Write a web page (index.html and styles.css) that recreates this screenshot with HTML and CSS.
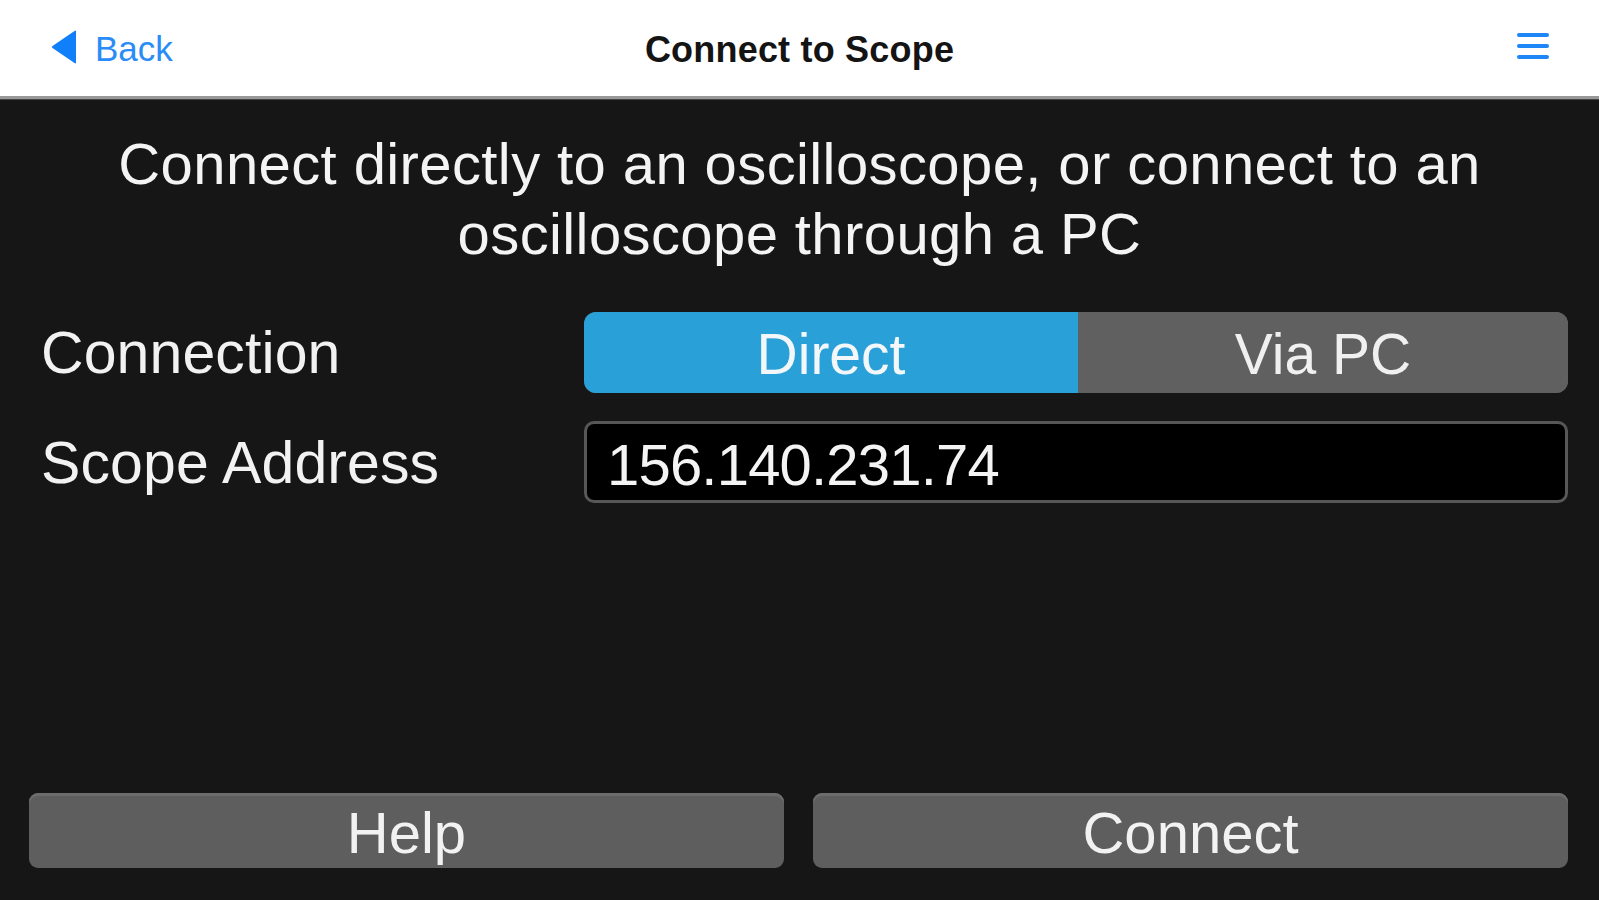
FILE: index.html
```html
<!DOCTYPE html>
<html lang="en">
<head>
<meta charset="utf-8">
<title>Connect to Scope</title>
<link rel="stylesheet" href="styles.css">
</head>
<body>
<div class="screen">
  <header class="navbar">
    <a class="back" href="#">
      <svg class="back-icon" width="26" height="34" viewBox="0 0 26 34" aria-hidden="true">
        <path d="M25 1.5 L25 32.5 Q25 34 23.5 33 L1.5 18 Q0 17 1.5 16 L23.5 1 Q25 0 25 1.5 Z" fill="#0f7ffa"/>
      </svg>
      <span>Back</span>
    </a>
    <h1 class="title">Connect to Scope</h1>
    <button class="menu" aria-label="Menu">
      <svg width="32" height="28" viewBox="0 0 32 28" aria-hidden="true">
        <line x1="2" y1="3" x2="30" y2="3" stroke="#1f86f7" stroke-width="4" stroke-linecap="round"/>
        <line x1="2" y1="14" x2="30" y2="14" stroke="#1f86f7" stroke-width="4" stroke-linecap="round"/>
        <line x1="2" y1="25" x2="30" y2="25" stroke="#1f86f7" stroke-width="4" stroke-linecap="round"/>
      </svg>
    </button>
  </header>

  <main class="content">
    <p class="intro">Connect directly to an oscilloscope, or connect to an oscilloscope through a PC</p>

    <div class="form">
      <div class="label">Connection</div>
      <div class="segmented">
        <div class="segment active">Direct</div>
        <div class="segment">Via PC</div>
      </div>

      <div class="label">Scope Address</div>
      <div class="field">156.140.231.74</div>
    </div>

    <div class="actions">
      <button class="btn">Help</button>
      <button class="btn">Connect</button>
    </div>
  </main>
</div>
</body>
</html>
```

FILE: styles.css
```css
* {
  box-sizing: border-box;
}

html, body {
  margin: 0;
  padding: 0;
  background: #161616;
}

body {
  font-family: "Liberation Sans", Arial, Helvetica, sans-serif;
  color: #f2f2f2;
}

.screen {
  width: 1599px;
  height: 900px;
  display: flex;
  flex-direction: column;
  overflow: hidden;
}

/* ---------- Navigation bar ---------- */
.navbar {
  flex: 0 0 auto;
  height: 99px;
  background: #ffffff;
  border-bottom: 3px solid #989898;
  box-shadow: 0 1px 0 #444444;
  display: grid;
  grid-template-columns: 1fr auto 1fr;
  align-items: center;
  padding: 0 51px 2px 51px;
}

.back {
  display: flex;
  align-items: center;
  gap: 18px;
  color: #2a8cf6;
  text-decoration: none;
  font-size: 35px;
  justify-self: start;
}

.back-icon {
  display: block;
  margin-top: -1px;
}

.back span {
  line-height: 1;
  margin-top: 2px;
}

.title {
  margin: 0;
  font-size: 36px;
  font-weight: 700;
  color: #141414;
  letter-spacing: 0.2px;
  line-height: 1;
  margin-top: 5px;
}

.menu {
  justify-self: end;
  background: none;
  border: 0;
  padding: 0;
  margin: -2px -1px 0 0;
  display: flex;
}

/* ---------- Content ---------- */
.content {
  flex: 1 1 auto;
  display: flex;
  flex-direction: column;
}

.intro {
  margin: 30px 0 0;
  padding: 0 80px;
  text-align: center;
  font-size: 58px;
  line-height: 70px;
  color: #f4f4f4;
  letter-spacing: 0.4px;
}

.form {
  margin-top: 43px;
  padding: 0 31px 0 41px;
  display: grid;
  grid-template-columns: 543px 1fr;
  row-gap: 28px;
  align-items: center;
}

.label {
  font-size: 59px;
  line-height: 1;
  color: #f2f2f2;
  letter-spacing: 0.1px;
  margin-top: 2px;
}

.segmented {
  height: 81px;
  display: flex;
  border-radius: 12px;
  overflow: hidden;
  background: #606060;
}

.segment {
  flex: 1 1 0;
  display: flex;
  align-items: center;
  justify-content: center;
  font-size: 57px;
  color: #f0f0f0;
  background: #606060;
  padding-top: 2px;
}

.segment.active {
  flex: 0 0 494px;
  background: #29a0d7;
  color: #f3f7fa;
}

.field {
  height: 82px;
  background: #000000;
  border: 3px solid #575757;
  border-radius: 10px;
  padding: 4px 0 0 20px;
  display: flex;
  align-items: center;
  font-size: 58px;
  letter-spacing: -0.8px;
  color: #f4f4f4;
}

/* ---------- Bottom actions ---------- */
.actions {
  margin-top: auto;
  padding: 0 31px 32px 29px;
  display: grid;
  grid-template-columns: 1fr 1fr;
  column-gap: 29px;
}

.btn {
  height: 75px;
  border: 0;
  border-radius: 9px;
  background: #5e5e5e;
  box-shadow: inset 0 3px 0 #6c6c6c;
  font-family: "Liberation Sans", Arial, Helvetica, sans-serif;
  font-size: 58px;
  color: #f2f2f2;
  padding: 4px 0 0;
  line-height: 1;
}
```
